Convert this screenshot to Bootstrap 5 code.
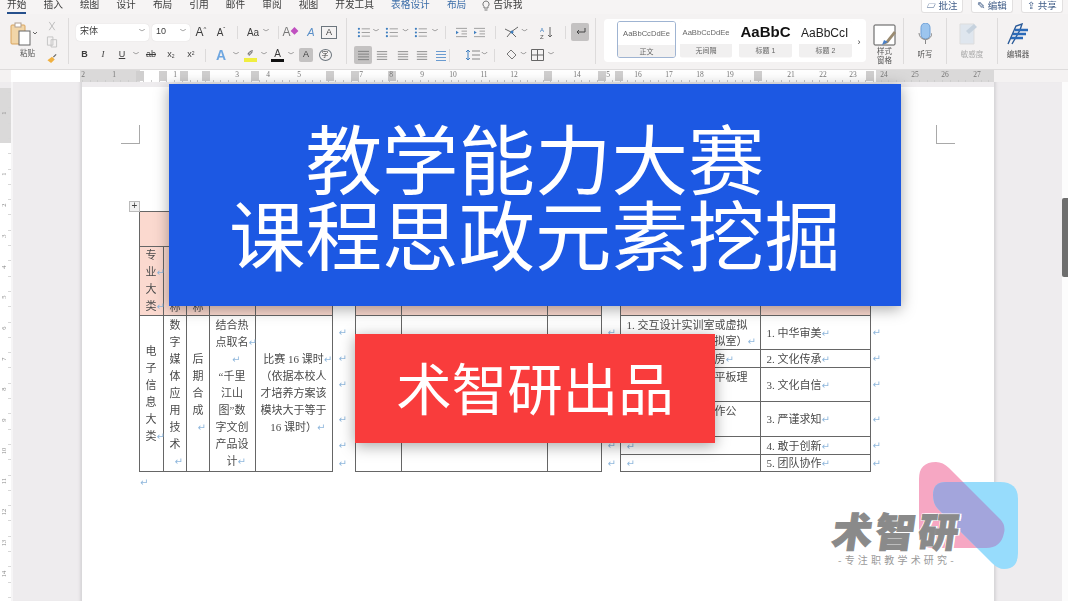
<!DOCTYPE html>
<html lang="zh-CN">
<head>
<meta charset="UTF-8">
<title>教学能力大赛 课程思政元素挖掘</title>
<link href="https://cdn.jsdelivr.net/npm/bootstrap@5.3.3/dist/css/bootstrap.min.css" rel="stylesheet">
<style>
  html, body { height: 100%; overflow: hidden; }
  body { background: #eeecee; font-family: "Liberation Sans", "Noto Sans CJK SC", sans-serif; color: #3c3c3c; }
  .shell { width: 1068px; height: 601px; position: relative; overflow: hidden; }
  .soft { filter: blur(.45px); }

  /* tabs */
  .tabs { height: 14px; background: #f6f4f4; font-size: 9.7px; line-height: 9px; padding-left: 7px; }
  .tab-item { margin-right: 17.1px; white-space: nowrap; }
  .tab-on { position: relative; }
  .tab-on::after { content: ""; position: absolute; left: 0; right: 0; top: 12px; height: 2px; background: #26508c; }
  .tab-blue { color: #3a6ca8; }
  .tip-icon { margin: 0 2px 0 -2px; }
  .top-btns { padding-right: 5px; gap: 8px; }
  .top-btn { width: 42px; height: 13px; background: #fff; border: 1px solid #e2e0e0; border-top: 0; border-radius: 0 0 3px 3px; font-size: 9.5px; line-height: 11px; color: #44608a; text-align: center; white-space: nowrap; }

  /* ribbon */
  .ribbon { height: 56px; background: #f4f2f2; border-bottom: 1px solid #dedcdc; }
  .rgroup { flex: none; height: 50px; }
  .g-clip { width: 68px; padding: 7px 0 0 10px; }
  .g-font { width: 277px; padding: 9px 0 0 7px; }
  .g-para { width: 248px; padding: 9px 0 0 7px; }
  .g-pane { width: 37px; padding-top: 8px; margin-left: 0; }
  .g-mic { width: 42px; padding-top: 7px; }
  .g-sens { width: 50px; padding-top: 7px; }
  .g-edit { width: 40px; padding-top: 7px; }
  .clip-main { width: 28px; }
  .clip-label { margin: 3px 0 0 7px; text-align: left; }
  .clip-side { margin-left: 8px; gap: 5px; }
  .rsep { flex: none; width: 1px; height: 46px; background: #dddbdb; margin-top: 4px; }
  .rline { height: 18px; }
  .rline2 { margin-top: 5px; }
  .mini-sep { flex: none; width: 1px; height: 13px; background: #dcdada; align-self: center; }
  .slot { flex: none; display: flex; align-items: center; justify-content: center; height: 18px; font-size: 10px; }
  .slot svg { display: block; }
  .sw-5 { width: 5px; } .sw-6 { width: 6px; } .sw-8 { width: 8px; } .sw-10 { width: 10px; } .sw-14 { width: 14px; } .sw-16 { width: 16px; }
  .sw-17 { width: 17px; } .sw-18 { width: 18px; } .sw-20 { width: 20px; } .sw-21 { width: 21px; } .sw-22 { width: 22px; } .sw-23 { width: 23px; }
  .sw-24 { width: 24px; } .sw-40 { width: 40px; }
  .sl-2 { margin-left: 2px; } .sl-3 { margin-left: 3px; } .sl-4 { margin-left: 4px; } .sl-5 { margin-left: 5px; } .sl-6 { margin-left: 6px; }
  .sl-7 { margin-left: 7px; } .sl-8 { margin-left: 8px; } .sl-10 { margin-left: 10px; } .sl-14 { margin-left: 14px; }
  .combo { background: #fff; border-radius: 4px; height: 17px; font-size: 9px; padding: 0 4px; flex: none; box-shadow: 0 0 1px #ccc; }
  .combo-font { width: 73px; } .combo-size { width: 38px; margin-left: 3px; }
  .caret-s { font-size: 6px; color: #666; }
  .on-gray { background: #c4c2c2; border-radius: 2px; }
  .t-12 { font-size: 12px; } .t-11 { font-size: 11px; } .t-9 { font-size: 9px; }
  .sup-s { font-size: 6px; }
  .fx-a { color: #777; } .fx-dot { color: #c050c0; font-size: 8px; }
  .abc-a { color: #5a8fc8; font-style: italic; }
  .box-a { font-size: 9px; line-height: 11px; }
  .serif-i { font-family: "Liberation Serif", serif; }
  .sub-s { font-size: 5px; }
  .blue-a { font-size: 14px; color: #6ea6e0; }
  .color-stack { flex-direction: column; }
  .pen-s { font-size: 8px; line-height: 9px; }
  .bar-yellow { width: 13px; height: 4px; background: #f0ee40; }
  .color-a { font-size: 10px; line-height: 11px; }
  .bar-black { width: 13px; height: 3px; background: #111; }
  .circle-z { font-size: 7px; line-height: 10px; padding: 0 2px; }

  .gallery { background: #fff; border-radius: 4px; height: 43px; width: 262px; margin: 5px 0 0 8px; flex: none; padding: 2px 0 2px 13px; }
  .style-card { flex: none; height: 37px; border-radius: 3px; background: #f9f8f8; text-align: center; overflow: hidden; width: 53px; margin-left: 7px; }
  .style-card.picked { border: 1px solid #9fb4d2; width: 59px; margin-left: 0; }
  .style-card.near { width: 52px; margin-left: 4px; }
  .style-sample { height: 23px; background: #fff; white-space: nowrap; display: flex; align-items: center; justify-content: center; overflow: hidden; font-size: 7.6px; color: #666; }
  .sample-h1 { font-size: 15px; font-weight: 700; color: #111; }
  .sample-h2 { font-size: 12px; color: #222; justify-content: flex-start; padding-left: 2px; }
  .style-name { height: 13px; font-size: 7px; line-height: 13px; color: #666; background: #f1f0f0; }
  .chev { width: 14px; height: 43px; font-size: 9px; }
  .big-label { font-size: 7.5px; line-height: 10px; color: #555; text-align: center; }
  .lab-pane { margin-top: 1px; line-height: 9px; }
  .lab-gap { margin-top: 5px; }
  .lab-off { color: #aaa; }

  /* ruler */
  .hruler { height: 12px; background: #f4f2f2; position: relative; }
  .hruler-white { position: absolute; left: 11px; top: 0; width: 983px; height: 12px; background: #fff; }
  .hruler-gray { position: absolute; top: 0; height: 12px; background: #dad9d9; }
  .hruler-box { position: absolute; top: 1px; width: 8px; height: 10px; background: #d0cfcf; }
  .hruler-num { position: absolute; top: 0; font-size: 7.5px; line-height: 10px; color: #777; transform: translateX(-50%); font-family: "Liberation Serif", serif; }
  .hruler-tick { position: absolute; bottom: 0; width: 1px; height: 2px; background: #cdcdcd; }

  /* doc area */
  .doc-area { height: 519px; }
  .vruler { width: 11px; flex: none; background: #fff; margin-top: 6px; position: relative; }
  .vruler-gray { position: absolute; left: 0; right: 0; top: 0; height: 55px; background: #dad9d9; }
  .vruler-tick { position: absolute; right: 0; height: 1px; width: 3px; background: #d8d8d8; }
  .vruler-num { position: absolute; left: 0; width: 8px; font-size: 6.5px; line-height: 8px; color: #888; text-align: center; transform: rotate(-90deg); font-family: "Liberation Serif", serif; }
  .doc-gutter { width: 71px; flex: none; border-left: 2px solid #f6f5f6; box-shadow: inset -4px 0 3px -2px #d6d4d7; }
  .doc-page { width: 912px; flex: none; background: #fff; margin-top: 5px; padding: 38px 39px 0 39px; position: relative; height: 514px; }
  .crop-mark { width: 19px; height: 19px; border-bottom: 1px solid #a9a9a9; }
  .crop-l { border-right: 1px solid #a9a9a9; }
  .crop-r { border-left: 1px solid #a9a9a9; }
  .doc-right { width: 68px; flex: none; box-shadow: inset 4px 0 3px -2px #d6d4d7; }
  .scroll-track { width: 6px; flex: none; background: #fcfcfc; position: relative; }
  .scroll-thumb { position: absolute; left: 0; right: 0; top: 116px; height: 79px; background: #6e6e6e; border-radius: 2px 0 0 2px; }

  /* word table */
  .move-handle { position: absolute; left: 47px; top: 114px; width: 11px; height: 11px; border: 1px solid #bbb; background: #f1f1f1; font-size: 10px; line-height: 8px; text-align: center; color: #444; }
  .word-table { margin: 67px 0 0 17.5px; table-layout: fixed; width: 749px; border-collapse: collapse; font-family: "Liberation Serif", "Noto Sans CJK SC", serif; font-size: 11px; line-height: 17px; color: #4a4a4a; }
  .word-table td { padding: 0; text-align: center; vertical-align: middle; overflow: visible; }
  .word-table td.cell { border: 1px solid #666; }
  .word-table td.head { background: #fbd9cf; }
  .word-table td.cell-l { text-align: left; padding-left: 6px; white-space: nowrap; line-height: 16px; }
  .word-table td.stack { padding: 0 6px; word-break: break-all; }
  .word-table td.stack-low { vertical-align: bottom; line-height: 16px; }
  .word-table td.gap-c { text-align: left; padding-left: 6px; }
  .word-table td.end-c { text-align: left; padding-left: 2px; }
  .c-24 { width: 24px; } .c-23 { width: 23px; } .c-46 { width: 46px; } .c-77 { width: 77px; } .c-146 { width: 146px; } .c-54 { width: 54px; }
  .c-19 { width: 19px; } .c-140 { width: 140px; } .c-110 { width: 110px; } .c-18 { width: 18px; }
  .r-h1 { height: 35px; } .r-h2 { height: 68px; }
  .r-1 { height: 34px; } .r-2 { height: 18px; } .r-3 { height: 34px; } .r-4 { height: 35px; } .r-5 { height: 18px; } .r-6 { height: 17px; }
  .pm { display: inline-block; width: 0; color: #8fb7dc; font-size: 10px; font-family: "DejaVu Sans", sans-serif; line-height: 1; white-space: nowrap; }
  .after-table { margin-left: 19px; line-height: 17px; }

  /* banners */
  .banner-blue { position: absolute; left: 169px; top: 84px; width: 732px; height: 222px; background: #1c58e3; color: #fff; font-size: 76.5px; line-height: 76px; text-align: center; padding-top: 34px; box-shadow: 0 3px 14px rgba(0,0,0,.35); font-family: "Noto Sans CJK SC", sans-serif; }
  .banner-red { position: absolute; left: 355px; top: 334px; width: 360px; height: 109px; background: #f93c3c; color: #fff; font-size: 55.5px; line-height: 105px; text-align: center; box-shadow: 0 3px 14px rgba(0,0,0,.35); font-family: "Noto Sans CJK SC", sans-serif; }

  /* logo */
  .logo-shapes { position: absolute; left: 910px; top: 455px; }
  .logo-name { position: absolute; left: 833px; top: 508px; width: 130px; font-family: "Noto Sans CJK SC", sans-serif; font-weight: 900; font-size: 40px; line-height: 44px; color: #8a8a8a; -webkit-text-stroke: 1px #8a8a8a; transform: skewX(-8deg); transform-origin: left center; text-shadow: 2px 1px 0 #fff, -1px -1px 0 #fff, 2px -1px 0 #fff, -1px 1px 0 #fff; white-space: nowrap; letter-spacing: 3px; }
  .logo-sub { position: absolute; left: 838px; top: 553px; font-family: "Noto Sans CJK SC", sans-serif; font-size: 10px; line-height: 14px; color: #9a9a9a; letter-spacing: 3.2px; white-space: nowrap; }
</style>
</head>
<body>
<div class="shell">
  <svg width="0" height="0" class="position-absolute">
    <symbol id="i-list" viewBox="0 0 14 12"><g stroke="#9a9a9a" stroke-width="1"><path d="M5 2h9M5 6h9M5 10h9"/></g><g fill="#3f7fc0"><circle cx="2" cy="2" r="1.2"/><circle cx="2" cy="6" r="1.2"/><circle cx="2" cy="10" r="1.2"/></g></symbol>
    <symbol id="i-align" viewBox="0 0 14 12"><path d="M1 1.5h12M1 4.5h12M1 7.5h12M1 10.5h12" stroke="#7c7c7c" fill="none"/></symbol>
    <symbol id="i-indent" viewBox="0 0 14 12"><path d="M1 1.5h12M7 4.5h6M7 7.5h6M1 10.5h12" stroke="#9a9a9a" fill="none"/><path d="M1 4l3 2-3 2z" fill="#3f7fc0"/></symbol>
  </svg>

  <!-- tabs -->
  <div class="tabs d-flex justify-content-between soft">
    <div class="d-flex">
      <span class="tab-item tab-on">开始</span><span class="tab-item">插入</span><span class="tab-item">绘图</span><span class="tab-item">设计</span><span class="tab-item">布局</span><span class="tab-item">引用</span><span class="tab-item">邮件</span><span class="tab-item">审阅</span><span class="tab-item">视图</span><span class="tab-item">开发工具</span><span class="tab-item tab-blue">表格设计</span><span class="tab-item tab-blue">布局</span>
      <svg width="10" height="12" viewBox="0 0 10 12" class="tip-icon"><path d="M5 1a3.2 3.2 0 0 0-2 5.6V8h4V6.6A3.2 3.2 0 0 0 5 1zM3.5 10h3" fill="none" stroke="#777"/></svg>
      <span class="tab-item">告诉我</span>
    </div>
    <div class="d-flex top-btns">
      <span class="top-btn">▱ 批注</span><span class="top-btn">✎ 编辑</span><span class="top-btn">⇪ 共享</span>
    </div>
  </div>

  <!-- ribbon -->
  <div class="ribbon d-flex soft">
    <!-- clipboard -->
    <div class="rgroup g-clip d-flex">
      <div class="clip-main">
        <svg width="28" height="24" viewBox="0 0 28 24"><rect x="1" y="3" width="14" height="19" rx="1" fill="#f2d6a8" stroke="#d9a45c"/><rect x="5" y="1" width="6" height="4" fill="#fff" stroke="#b0a090"/><rect x="9" y="9" width="11" height="14" fill="#fff" stroke="#666"/><path d="M23 10l2 2 2-2" fill="none" stroke="#666"/></svg>
        <div class="big-label clip-label">粘贴</div>
      </div>
      <div class="d-flex flex-column clip-side">
        <svg width="12" height="11" viewBox="0 0 12 11"><path d="M3 1l6 9M9 1l-6 9" stroke="#b9b9b9" fill="none"/></svg>
        <svg width="12" height="13" viewBox="0 0 12 13"><path d="M1 1h6v9H1zM5 4h6v8H5z" stroke="#c2c2c2" fill="#f4f2f2"/></svg>
        <svg width="12" height="12" viewBox="0 0 12 12"><path d="M1 8l5-4 3 3-4 4z" fill="#f0b040"/><path d="M7 4l3-3 1 1-3 3z" fill="#666"/></svg>
      </div>
    </div>
    <div class="rsep"></div>
    <!-- font -->
    <div class="rgroup g-font">
      <div class="rline d-flex align-items-center">
        <div class="combo combo-font d-flex justify-content-between align-items-center"><span>宋体</span><span class="caret-s">﹀</span></div>
        <div class="combo combo-size d-flex justify-content-between align-items-center"><span>10</span><span class="caret-s">﹀</span></div>
        <div class="slot sw-22 t-12">A<sup class="sup-s">^</sup></div>
        <div class="slot sw-18">A<sup class="sup-s">ˇ</sup></div>
        <div class="mini-sep sl-7"></div>
        <div class="slot sw-40">Aa <span class="caret-s ms-1">﹀</span></div>
        <div class="mini-sep"></div>
        <div class="slot sw-23 t-12 fx-a">A<span class="fx-dot">◆</span></div>
        <div class="slot sw-18 t-11 abc-a">A</div>
        <div class="slot sw-18"><span class="border border-secondary px-1 box-a">A</span></div>
      </div>
      <div class="rline rline2 d-flex align-items-center">
        <div class="slot sw-17 fw-bold t-9">B</div>
        <div class="slot sw-20 fst-italic t-9 serif-i">I</div>
        <div class="slot sw-18 text-decoration-underline t-9">U</div>
        <div class="slot sw-10 caret-s">﹀</div>
        <div class="slot sw-20 text-decoration-line-through t-9">ab</div>
        <div class="slot sw-20 t-9">x<sub class="sub-s">2</sub></div>
        <div class="slot sw-20 t-9">x<sup class="sub-s">2</sup></div>
        <div class="mini-sep sl-4"></div>
        <div class="slot sw-24 sl-3 fw-bold blue-a">A</div>
        <div class="slot sw-6 caret-s">﹀</div>
        <div class="slot sw-22 color-stack"><span class="pen-s">✐</span><span class="bar-yellow"></span></div>
        <div class="slot sw-6 caret-s">﹀</div>
        <div class="slot sw-21 color-stack"><span class="color-a">A</span><span class="bar-black"></span></div>
        <div class="slot sw-6 caret-s">﹀</div>
        <div class="slot sw-24"><span class="on-gray px-1 t-9">A</span></div>
        <div class="slot sw-14"><span class="border border-secondary rounded-circle circle-z">字</span></div>
      </div>
    </div>
    <div class="rsep"></div>
    <!-- paragraph -->
    <div class="rgroup g-para">
      <div class="rline d-flex align-items-center">
        <div class="slot sw-18"><svg width="13" height="11"><use href="#i-list"/></svg></div>
        <div class="slot sw-8 caret-s">﹀</div>
        <div class="slot sw-23"><svg width="13" height="11"><use href="#i-list"/></svg></div>
        <div class="slot sw-5 caret-s">﹀</div>
        <div class="slot sw-24"><svg width="13" height="11"><use href="#i-list"/></svg></div>
        <div class="slot sw-6 caret-s">﹀</div>
        <div class="mini-sep sl-7"></div>
        <div class="slot sw-18 sl-6"><svg width="13" height="11"><use href="#i-indent"/></svg></div>
        <div class="slot sw-18"><svg width="13" height="11"><use href="#i-indent"/></svg></div>
        <div class="mini-sep sl-7"></div>
        <div class="slot sw-20 sl-6"><svg width="16" height="14" viewBox="0 0 16 14"><path d="M1 4l6 3 7-5M3 12l4-5 5 5" fill="none" stroke="#666"/><circle cx="8" cy="7" r="1.5" fill="#3f7fc0"/></svg></div>
        <div class="slot sw-5 caret-s">﹀</div>
        <div class="slot sw-20 sl-10"><svg width="14" height="13" viewBox="0 0 14 13"><text x="0" y="6" font-size="6" fill="#3f7fc0">A</text><text x="0" y="13" font-size="6" fill="#555">Z</text><path d="M10 1v10M8 9l2 2 2-2" fill="none" stroke="#666"/></svg></div>
        <div class="mini-sep sl-8"></div>
        <div class="slot sw-18 on-gray sl-5"><svg width="13" height="11" viewBox="0 0 13 11"><path d="M11 1v4H3M5 3L3 5l2 2" fill="none" stroke="#444"/></svg></div>
      </div>
      <div class="rline rline2 d-flex align-items-center">
        <div class="slot sw-18 on-gray"><svg width="13" height="11"><use href="#i-align"/></svg></div>
        <div class="slot sw-20"><svg width="12" height="11"><use href="#i-align"/></svg></div>
        <div class="slot sw-21"><svg width="12" height="11"><use href="#i-align"/></svg></div>
        <div class="slot sw-18"><svg width="12" height="11"><use href="#i-align"/></svg></div>
        <div class="slot sw-16 sl-2"><svg width="12" height="11" viewBox="0 0 12 11"><path d="M1 1.5h10M1 4.5h10M1 7.5h10M1 10.5h10" stroke="#6a9bd0"/></svg></div>
        <div class="mini-sep"></div>
        <div class="slot sw-18 sl-14"><svg width="14" height="12" viewBox="0 0 14 12"><path d="M6 2h8M6 6h8M6 10h8" stroke="#888"/><path d="M2 1v10M0 3l2-2 2 2M0 9l2 2 2-2" fill="none" stroke="#3f7fc0"/></svg></div>
        <div class="slot sw-5 caret-s">﹀</div>
        <div class="mini-sep sl-7"></div>
        <div class="slot sw-20 sl-6"><svg width="13" height="13" viewBox="0 0 13 13"><path d="M6 1l5 5-4 4-5-5z" fill="none" stroke="#777"/></svg></div>
        <div class="slot sw-5 caret-s">﹀</div>
        <div class="slot sw-18 sl-2"><svg width="13" height="12" viewBox="0 0 13 12"><path d="M.5.5h12v11H.5zM6.5.5v11M.5 6h12" fill="none" stroke="#666"/></svg></div>
        <div class="slot sw-6 sl-2 caret-s">﹀</div>
      </div>
    </div>
    <div class="rsep"></div>
    <!-- styles -->
    <div class="gallery d-flex">
      <div class="style-card picked"><div class="style-sample">AaBbCcDdEe</div><div class="style-name">正文</div></div>
      <div class="style-card near"><div class="style-sample">AaBbCcDdEe</div><div class="style-name">无间隔</div></div>
      <div class="style-card"><div class="style-sample sample-h1">AaBbC</div><div class="style-name">标题 1</div></div>
      <div class="style-card"><div class="style-sample sample-h2">AaBbCcI</div><div class="style-name">标题 2</div></div>
      <div class="slot chev">›</div>
    </div>
    <div class="rgroup g-pane text-center">
      <svg width="24" height="22" viewBox="0 0 24 22"><rect x="1" y="1" width="21" height="20" rx="1" fill="#fff" stroke="#555"/><path d="M21 7L13 17l-3 4 5-2 8-10z" fill="#9a8a70"/><path d="M9 21l2-5 4 2z" fill="#4a80c8"/></svg>
      <div class="big-label lab-pane">样式<br>窗格</div>
    </div>
    <div class="rsep"></div>
    <div class="rgroup g-mic text-center">
      <svg width="14" height="22" viewBox="0 0 14 22"><rect x="3" y="0" width="9" height="16" rx="4.5" fill="#9cc5ee" stroke="#6e9fd6"/><path d="M1 10a6.5 6.5 0 0 0 13 0M7.5 17v4" fill="none" stroke="#888"/></svg>
      <div class="big-label lab-gap">听写</div>
    </div>
    <div class="rsep"></div>
    <div class="rgroup g-sens text-center">
      <svg width="28" height="22" viewBox="0 0 28 22"><path d="M2 1h14v20H2z" fill="#dfe6ee" stroke="#ddd"/><path d="M8 8l8-7 3 3-8 7z" fill="#c6d2de"/></svg>
      <div class="big-label lab-gap lab-off">敏感度</div>
    </div>
    <div class="rsep"></div>
    <div class="rgroup g-edit text-center">
      <svg width="24" height="22" viewBox="0 0 24 22"><path d="M2 21L10 3l6-2-2 6-8 14" fill="none" stroke="#2a5a98" stroke-width="1.4"/><path d="M9 7h13M7 11h13M5 15h12" stroke="#2a6ab8" stroke-width="2.4"/></svg>
      <div class="big-label lab-gap">编辑器</div>
    </div>
  </div>

  <!-- horizontal ruler, filled in by the script below -->
  <div class="hruler soft" id="hruler"><div class="hruler-white"></div></div>

  <!-- document -->
  <div class="doc-area d-flex">
    <div class="vruler soft" id="vruler"><div class="vruler-gray"></div></div>
    <div class="doc-gutter"></div>
    <div class="doc-page soft">
      <div class="d-flex justify-content-between">
        <div class="crop-mark crop-l"></div>
        <div class="crop-mark crop-r"></div>
      </div>
      <div class="move-handle">+</div>
      <table class="word-table">
        <colgroup>
          <col class="c-24"><col class="c-23"><col class="c-23"><col class="c-46"><col class="c-77"><col class="c-23">
          <col class="c-46"><col class="c-146"><col class="c-54"><col class="c-19"><col class="c-140"><col class="c-110"><col class="c-18">
        </colgroup>
        <tr class="r-h1">
          <td class="cell head" colspan="5"></td><td></td>
          <td class="cell head" colspan="3"></td><td></td>
          <td class="cell head" colspan="2"></td><td></td>
        </tr>
        <tr class="r-h2">
          <td class="cell head stack">专业<span class="pm">↵</span>大类<span class="pm">↵</span></td>
          <td class="cell head stack stack-low">称</td>
          <td class="cell head stack stack-low">称</td>
          <td class="cell head"></td><td class="cell head"></td><td></td>
          <td class="cell head"></td><td class="cell head"></td><td class="cell head"></td><td></td>
          <td class="cell head"></td><td class="cell head"></td><td></td>
        </tr>
        <tr class="r-1">
          <td class="cell stack" rowspan="6">电子信息大类<span class="pm">↵</span></td>
          <td class="cell stack" rowspan="6">数字媒体应用技术<span class="pm">↵</span></td>
          <td class="cell stack" rowspan="6">后期合成<span class="pm">↵</span></td>
          <td class="cell stack" rowspan="6">结合热点取名<span class="pm">↵</span><br><span class="pm">↵</span><br>“千里江山图”数字文创产品设计<span class="pm">↵</span></td>
          <td class="cell" rowspan="6">比赛 16 课时<span class="pm">↵</span><br>（依据本校人<br>才培养方案该<br>模块大于等于<br>16 课时）<span class="pm">↵</span></td>
          <td class="gap-c"><span class="pm">↵</span></td>
          <td class="cell" rowspan="6"></td><td class="cell" rowspan="6"></td><td class="cell" rowspan="6"></td>
          <td class="gap-c"><span class="pm">↵</span></td>
          <td class="cell cell-l">1. 交互设计实训室或虚拟<br>现实实训中心（虚拟室）<span class="pm">↵</span></td>
          <td class="cell cell-l">1. 中华审美<span class="pm">↵</span></td>
          <td class="end-c"><span class="pm">↵</span></td>
        </tr>
        <tr class="r-2"><td class="gap-c"><span class="pm">↵</span></td><td class="gap-c"></td><td class="cell cell-l">2. 数字媒体实训机房<span class="pm">↵</span></td><td class="cell cell-l">2. 文化传承<span class="pm">↵</span></td><td class="end-c"><span class="pm">↵</span></td></tr>
        <tr class="r-3"><td class="gap-c"><span class="pm">↵</span></td><td class="gap-c"></td><td class="cell cell-l">3. 数字绘画设备或平板理<br>论<span class="pm">↵</span></td><td class="cell cell-l">3. 文化自信<span class="pm">↵</span></td><td class="end-c"><span class="pm">↵</span></td></tr>
        <tr class="r-4"><td class="gap-c"><span class="pm">↵</span></td><td class="gap-c"></td><td class="cell cell-l">4. 校企合作文创创作公<br>司<span class="pm">↵</span></td><td class="cell cell-l">3. 严谨求知<span class="pm">↵</span></td><td class="end-c"><span class="pm">↵</span></td></tr>
        <tr class="r-5"><td class="gap-c"><span class="pm">↵</span></td><td class="gap-c"><span class="pm">↵</span></td><td class="cell cell-l"><span class="pm">↵</span></td><td class="cell cell-l">4. 敢于创新<span class="pm">↵</span></td><td class="end-c"><span class="pm">↵</span></td></tr>
        <tr class="r-6"><td class="gap-c"><span class="pm">↵</span></td><td class="gap-c"><span class="pm">↵</span></td><td class="cell cell-l"><span class="pm">↵</span></td><td class="cell cell-l">5. 团队协作<span class="pm">↵</span></td><td class="end-c"><span class="pm">↵</span></td></tr>
      </table>
      <div class="after-table"><span class="pm">↵</span></div>
    </div>
    <div class="doc-right"></div>
    <div class="scroll-track"><div class="scroll-thumb"></div></div>
  </div>

  <!-- overlays -->
  <div class="banner-blue">教学能力大赛<br>课程思政元素挖掘</div>
  <div class="banner-red">术智研出品</div>

  <svg class="logo-shapes" width="115" height="120" viewBox="0 0 115 120">
    <defs>
      <path id="logoBlue" d="M36 27H90Q108 27 108 44V98Q108 114 94 114 88 114 82 108L28 54Q23 49 23 40Q23 27 36 27Z"/>
      <clipPath id="logoClip"><use href="#logoBlue"/></clipPath>
    </defs>
    <path d="M9 24Q9 7 26 7 33 7 39 13L90 64Q96 70 94 78 91 93 76 93H23Q9 93 9 79Z" fill="#f6a7c3"/>
    <use href="#logoBlue" fill="#97dcfc"/>
    <path clip-path="url(#logoClip)" d="M9 24Q9 7 26 7 33 7 39 13L90 64Q96 70 94 78 91 93 76 93H23Q9 93 9 79Z" fill="#a3a5dc"/>
  </svg>
  <div class="logo-name">术智研</div>
  <div class="logo-sub">-专注职教学术研究-</div>
</div>

<script>
  // ruler marks
  var ruler = document.getElementById('hruler');
  function addTo(parent, cls, style, text) {
    var el = document.createElement('div');
    el.className = cls;
    el.style.cssText = style;
    if (text) el.textContent = text;
    parent.appendChild(el);
  }
  [[80, 60], [876, 118]].forEach(function (g) { addTo(ruler, 'hruler-gray', 'left:' + g[0] + 'px;width:' + g[1] + 'px'); });
  [136, 159, 180, 202, 251, 326, 351, 388, 544, 598, 615, 754, 866].forEach(function (x) { addTo(ruler, 'hruler-box', 'left:' + x + 'px'); });
  for (var x = 82; x < 992; x += 7.68) addTo(ruler, 'hruler-tick', 'left:' + x + 'px');
  [[83,'2'],[114,'1'],[175,'1'],[237,'3'],[268,'4'],[299,'5'],[361,'7'],[391,'8'],[422,'9'],[453,'10'],[484,'11'],[514,'12'],[577,'14'],[608,'5'],[638,'16'],[669,'17'],[700,'18'],[730,'19'],[791,'21'],[823,'22'],[853,'23'],[884,'24'],[915,'25'],[945,'26'],[977,'27']].forEach(function (n) {
    addTo(ruler, 'hruler-num', 'left:' + n[0] + 'px', n[1]);
  });
  var vr = document.getElementById('vruler');
  for (var y = 4; y < 510; y += 15.3) addTo(vr, 'vruler-tick', 'top:' + y + 'px');
  ['1', '', '1', '2', '3', '4', '5', '6', '7', '8', '9', '10', '11', '12', '13', '14'].forEach(function (label, i) {
    if (label) addTo(vr, 'vruler-num', 'top:' + (21 + i * 30.7) + 'px', label);
  });
</script>
<script src="https://cdn.jsdelivr.net/npm/bootstrap@5.3.3/dist/js/bootstrap.bundle.min.js"></script>
</body>
</html>
